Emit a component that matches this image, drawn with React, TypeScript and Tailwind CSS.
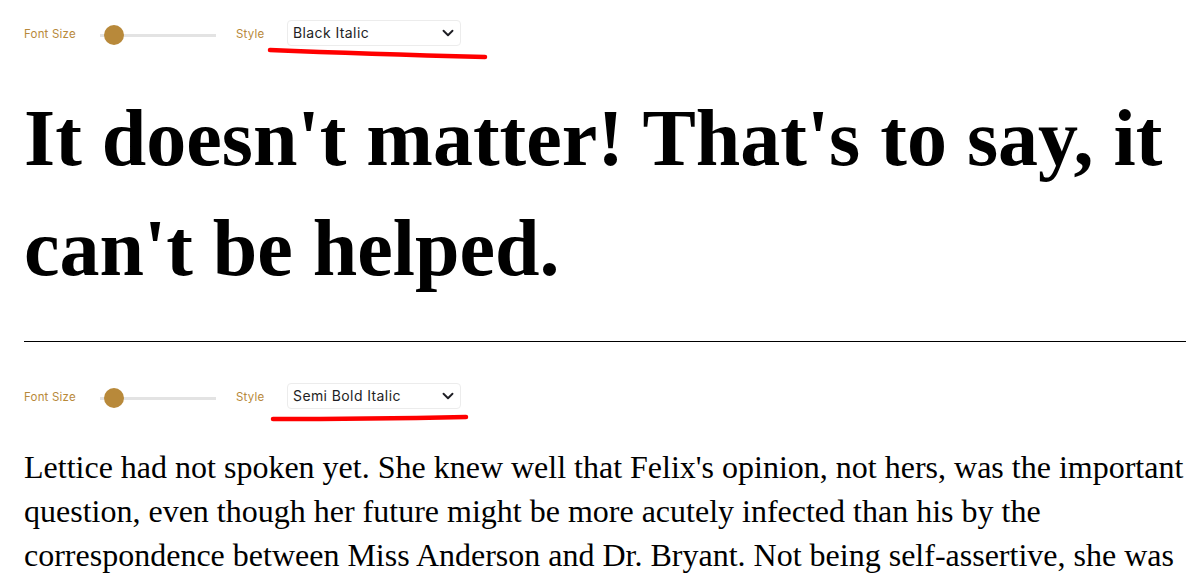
import { ChevronDown } from 'lucide-react';

function Controls({ style, line }: { style: string; line: string }) {
  return (
    <div className="relative flex h-[52px] items-center font-['Inter',sans-serif]">
      <span className="w-[76px] text-[11.5px] tracking-[0.2px] text-[#b8893a]">Font Size</span>
      <div className="relative flex h-5 w-[116px] items-center">
        <div className="h-[3px] w-full bg-[#e3e3e3]" />
        <div className="absolute left-[4px] h-5 w-5 rounded-full bg-[#b8893a]" />
      </div>
      <span className="ml-[20px] w-[51px] text-[11.5px] tracking-[0.2px] text-[#b8893a]">Style</span>
      <div className="mb-[5px] flex h-[26px] w-[174px] items-center justify-between rounded border border-[#ececec] pl-[5px] pr-[3px] text-[14px] tracking-[0.4px] text-[#1e1e24]">
        <span>{style}</span>
        <ChevronDown className="h-[18px] w-[18px]" strokeWidth={2.5} />
      </div>
      <svg className="pointer-events-none absolute left-[242px] top-[36px] h-[24px] w-[230px] overflow-visible" viewBox="0 0 230 24">
        <path d={line} stroke="#ff0000" strokeWidth="4.5" strokeLinecap="round" fill="none" />
      </svg>
    </div>
  );
}

export default function App() {
  return (
    <div className="bg-white pl-6 pr-[14px] pt-[9px] text-black">
      <Controls style="Black Italic" line="M4 5 Q 100 9 219 12" />
      <h1 className="mt-[22px] font-['Liberation_Serif',serif] text-[80px] font-bold leading-[110px]">
        It doesn't matter! That's to say, it can't be helped.
      </h1>
      <hr className="mt-[38px] border-t border-black" />
      <div className="mt-[30px]">
        <Controls style="Semi Bold Italic" line="M7 11 Q 100 11 200 9" />
      </div>
      <p className="mt-[21px] font-['Liberation_Serif',serif] text-[32px] leading-[44px]">
        Lettice had not spoken yet. She knew well that Felix's opinion, not hers, was the important question, even though her future might be more acutely infected than his by the correspondence between Miss Anderson and Dr. Bryant. Not being self-assertive, she was
        content to wait.
      </p>
    </div>
  );
}
